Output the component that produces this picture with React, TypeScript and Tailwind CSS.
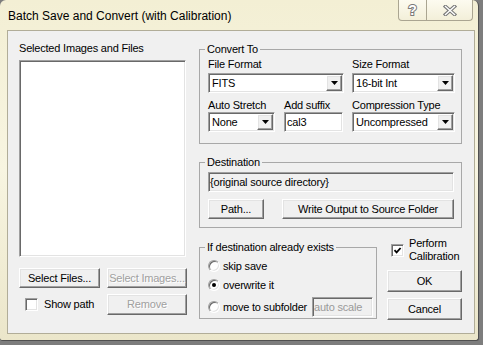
import React from 'react';

// classic 3D edges
const sunken =
  'border border-t-[#a0a0a0] border-l-[#a0a0a0] border-r-white border-b-white shadow-[inset_1px_1px_0_#696969,inset_-1px_-1px_0_#e3e3e3]';
const raised =
  'border border-t-white border-l-white border-r-[#696969] border-b-[#696969] shadow-[inset_-1px_-1px_0_#a0a0a0,inset_1px_1px_0_#e3e3e3] bg-[#f0f0f0]';

function Button({
  label,
  className = '',
  disabled = false,
}: {
  label: string;
  className?: string;
  disabled?: boolean;
}) {
  return (
    <button
      type="button"
      className={`${raised} flex items-center justify-center ${
        disabled ? 'text-[#a0a0a0] [text-shadow:1px_1px_0_#fff]' : 'text-black'
      } ${className}`}
    >
      {label}
    </button>
  );
}

function Combo({ value, className = '' }: { value: string; className?: string }) {
  return (
    <div className={`${sunken} bg-white flex items-stretch p-px h-[20px] ${className}`}>
      <span className="flex-1 self-center pl-[2px] truncate">{value}</span>
      <span className={`${raised} w-[16px] flex items-center justify-center`}>
        <svg width="7" height="4" viewBox="0 0 7 4">
          <path d="M0 0h7L3.5 4z" fill="#000" />
        </svg>
      </span>
    </div>
  );
}

function Radio({ checked = false }: { checked?: boolean }) {
  return (
    <span
      className={`${sunken} w-[12px] h-[12px] rounded-full bg-white flex items-center justify-center shrink-0`}
    >
      {checked && <span className="w-[4px] h-[4px] rounded-full bg-black" />}
    </span>
  );
}

function Check({ checked = false }: { checked?: boolean }) {
  return (
    <span className={`${sunken} w-[13px] h-[13px] bg-white flex items-center justify-center shrink-0`}>
      {checked && (
        <svg width="9" height="9" viewBox="0 0 9 9">
          <path d="M1.5 4.2 L3.6 6.4 L7.6 2" stroke="#000" strokeWidth="1.8" fill="none" />
        </svg>
      )}
    </span>
  );
}

function Group({
  title,
  className = '',
  children,
}: {
  title: string;
  className?: string;
  children: React.ReactNode;
}) {
  return (
    <fieldset className={`border border-[#a8a8a8] ${className}`}>
      <legend className="ml-[5px] px-[2px] leading-[13px]">{title}</legend>
      {children}
    </fieldset>
  );
}

export default function App() {
  return (
    <div className="w-[483px] h-[345px] bg-[#7d7d7d] overflow-hidden font-['Liberation_Sans',Arial,sans-serif] text-[11px] leading-[13px] tracking-[-0.2px] text-black">
      <div className="w-[479px] h-[341px] rounded-t-[6px] rounded-b-[3px] border-r border-b border-[#505050] bg-gradient-to-b from-[#f3efd4] via-[#f8f5e1] to-[#ebe6ca] flex flex-col">
        {/* title bar */}
        <div className="h-[30px] flex items-start pl-[8px] pr-[5px]">
          <div className="pt-[8px] text-[12px] leading-[16px] tracking-normal">
            Batch Save and Convert (with Calibration)
          </div>
          <div className="ml-auto flex h-[21px] border border-t-0 border-[#aaa591] rounded-b-[4px] bg-gradient-to-b from-[#fdfbf0] to-[#f3efd9]">
            <div className="w-[28px] flex items-center justify-center border-r border-[#aaa591]">
              <span className="text-[14px] font-bold leading-[14px] text-white [-webkit-text-stroke:2px_#7a7a7a] [paint-order:stroke_fill]">
                ?
              </span>
            </div>
            <div className="w-[45px] flex items-center justify-center">
              <svg width="14" height="11" viewBox="0 0 14 11">
                <path d="M2.5 1.5 L11.5 9.5 M11.5 1.5 L2.5 9.5" stroke="#7a7a7a" strokeWidth="3.6" strokeLinecap="square" />
                <path d="M2.5 1.5 L11.5 9.5 M11.5 1.5 L2.5 9.5" stroke="#fff" strokeWidth="1.4" strokeLinecap="square" />
              </svg>
            </div>
          </div>
        </div>

        {/* client area */}
        <div className="ml-[7px] w-[468px] h-[304px] border border-[#b1ad98] bg-[#f0f0f0] flex pl-[11px]">
          {/* left column */}
          <div className="w-[168px] flex flex-col pt-[11px]">
            <div>Selected Images and Files</div>
            <div className={`${sunken} mt-[5px] w-[167px] h-[197px] bg-white`} />
            <div className="mt-[11px] flex gap-[7px]">
              <Button label="Select Files..." className="w-[81px] h-[20px]" />
              <Button label="Select Images..." disabled className="w-[80px] h-[20px]" />
            </div>
            <div className="mt-[6px] flex items-center">
              <div className="w-[81px] flex items-center pl-[6px]">
                <Check />
                <span className="ml-[6px]">Show path</span>
              </div>
              <Button label="Remove" disabled className="ml-[7px] w-[80px] h-[21px]" />
            </div>
          </div>

          {/* right column */}
          <div className="ml-[12px] w-[263px] flex flex-col pt-[12px]">
            <Group title="Convert To">
              <div className="pl-[8px] pt-[2px] pb-[11px]">
                <div className="flex">
                  <div className="flex flex-col w-[136px]">
                    <span>File Format</span>
                    <Combo value="FITS" className="mt-[2px]" />
                  </div>
                  <div className="flex flex-col w-[103px] ml-[8px]">
                    <span>Size Format</span>
                    <Combo value="16-bit Int" className="mt-[2px]" />
                  </div>
                </div>
                <div className="flex mt-[6px]">
                  <div className="flex flex-col w-[67px]">
                    <span>Auto Stretch</span>
                    <Combo value="None" />
                  </div>
                  <div className="flex flex-col w-[59px] ml-[9px]">
                    <span>Add suffix</span>
                    <div className={`${sunken} h-[20px] bg-white flex items-center pl-[2px]`}>cal3</div>
                  </div>
                  <div className="flex flex-col w-[103px] ml-[9px]">
                    <span>Compression Type</span>
                    <Combo value="Uncompressed" />
                  </div>
                </div>
              </div>
            </Group>

            <Group title="Destination" className="mt-[12px]">
              <div className="pl-[8px] pt-[3px] pb-[8px]">
                <div className={`${sunken} w-[246px] h-[20px] bg-[#f0f0f0] flex items-center pl-px`}>
                  {'{original source directory}'}
                </div>
                <div className="mt-[7px] w-[246px] flex">
                  <Button label="Path..." className="w-[56px] h-[20px]" />
                  <Button label="Write Output to Source Folder" className="ml-auto w-[172px] h-[20px]" />
                </div>
              </div>
            </Group>

            <div className="mt-[9px] flex items-start">
              <Group title="If destination already exists" className="mt-[4px] w-[179px]">
                <div className="pl-[8px] pr-[3px] pt-[4px] pb-px flex flex-col">
                  <div className="h-[16px] flex items-center">
                    <Radio />
                    <span className="ml-[3px]">skip save</span>
                  </div>
                  <div className="mt-[3px] h-[16px] flex items-center">
                    <Radio checked />
                    <span className="ml-[3px]">overwrite it</span>
                  </div>
                  <div className="mt-[4px] h-[20px] flex items-center">
                    <Radio />
                    <span className="ml-[3px]">move to subfolder</span>
                    <div className={`${sunken} ml-auto w-[61px] h-[20px] bg-[#f0f0f0] flex items-center pl-px text-[#9a9a9a]`}>
                      auto scale
                    </div>
                  </div>
                </div>
              </Group>

              <div className="ml-[10px] w-[75px] flex flex-col">
                <div className="flex items-center">
                  <span className="ml-[4px]">
                    <Check checked />
                  </span>
                  <span className="ml-[5px]">
                    Perform
                    <br />
                    Calibration
                  </span>
                </div>
                <Button label="OK" className="mt-[7px] w-[75px] h-[22px]" />
                <Button label="Cancel" className="mt-[6px] w-[75px] h-[22px]" />
              </div>
            </div>
          </div>
        </div>
      </div>
    </div>
  );
}
